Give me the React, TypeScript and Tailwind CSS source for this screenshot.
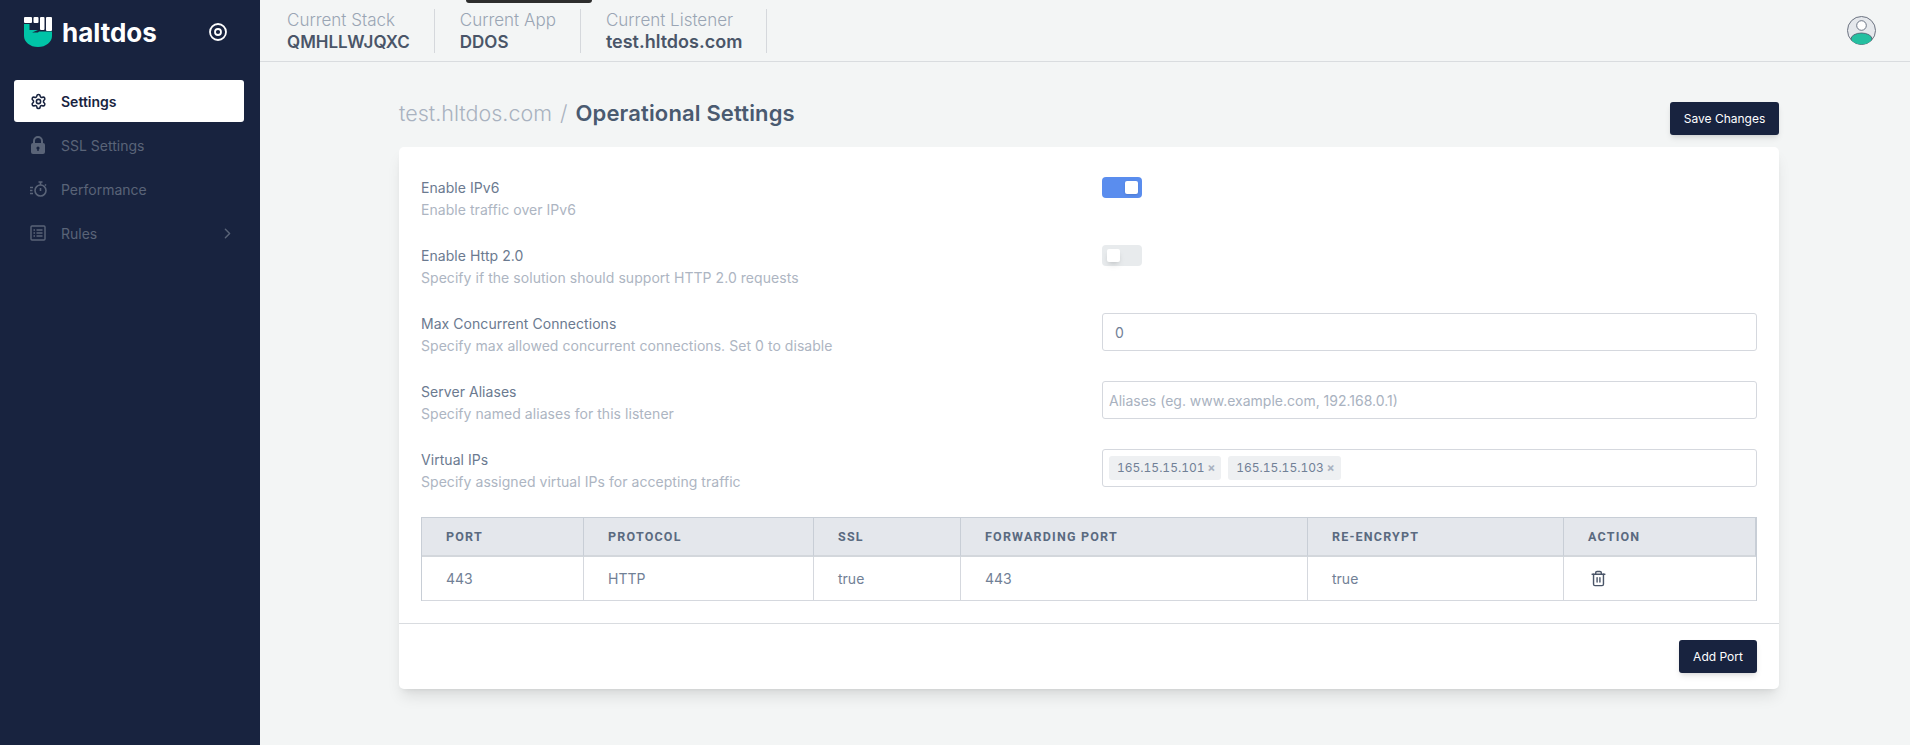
import type { ReactNode } from "react";
import { Settings, ChevronRight, Trash2 } from "lucide-react";

const headers = ["PORT", "PROTOCOL", "SSL", "FORWARDING PORT", "RE-ENCRYPT", "ACTION"];
const cells = ["443", "HTTP", "true", "443", "true"];

function Logo() {
  return (
    <svg width="28" height="30" viewBox="0 0 28 30">
      <rect x="0" y="0" width="8" height="6" rx="1" fill="#fff" />
      <rect x="9.5" y="0" width="5" height="6" rx="1" fill="#fff" />
      <rect x="16" y="0" width="4.5" height="13" rx="1" fill="#fff" />
      <rect x="22" y="0" width="6" height="14" rx="1" fill="#fff" />
      <path d="M0 7h5.5v6h8.5l-6 2.5H14l1-1h13V19c0 6-6 11-14 11S0 25 0 19z" fill="#00c4a7" />
    </svg>
  );
}

function LockIcon() {
  return (
    <svg width="16" height="18" viewBox="0 0 16 18" fill="none">
      <path d="M4 8V5a4 4 0 0 1 8 0v3" stroke="currentColor" strokeWidth="2" />
      <rect x="1" y="7" width="14" height="11" rx="2" fill="currentColor" />
      <circle cx="8" cy="12" r="1.6" fill="#18233f" />
      <rect x="7.3" y="12" width="1.4" height="3" fill="#18233f" />
    </svg>
  );
}

function TimerIcon() {
  return (
    <svg width="17" height="16" viewBox="0 0 17 16" fill="none" stroke="currentColor" strokeWidth="1.6">
      <circle cx="10.5" cy="9.5" r="5.5" />
      <path d="M8.5 1h4M10.5 1v3M10.5 7v3M15 3.5l1 1M0 6.5h3M0 9.5h2.5M0 12.5h3" />
    </svg>
  );
}

function ListIcon() {
  return (
    <svg width="16" height="16" viewBox="0 0 16 16" fill="none" stroke="currentColor" strokeWidth="1.4">
      <rect x="1" y="1" width="14" height="14" rx="1" />
      <path d="M3.5 5h1.5M3.5 8h1.5M3.5 11h1.5M6.5 5h6M6.5 8h6M6.5 11h6" />
    </svg>
  );
}

function Stat({ label, children }: { label: string; children: ReactNode }) {
  return (
    <div className="mr-[25px] h-[44px] border-r border-[#d5d8dc] pr-[24px]">
      <div className="text-[17px] font-light leading-[22px] text-[#9aa5b4]">{label}</div>
      {children}
    </div>
  );
}

function Row({ title, desc, children }: { title: string; desc: string; children: ReactNode }) {
  return (
    <div className="flex h-[68px]">
      <div className="w-[681px] tracking-[0.05px]">
        <div className="text-[14px] leading-[20px] text-[#6b7a90]">{title}</div>
        <div className="mt-[2px] text-[14px] leading-[20px] text-[#adb5c2]">{desc}</div>
      </div>
      <div className="mt-[-1px] flex-1">{children}</div>
    </div>
  );
}

function Chip({ ip }: { ip: string }) {
  return (
    <span className="flex h-[24px] items-center gap-[3px] rounded-[3px] bg-[#eef0f2] pl-[8px] pr-[6px] text-[12px] tabular-nums text-[#718096]">
      {ip}
      <span className="text-[12px] font-bold text-[#a9b2c0]">×</span>
    </span>
  );
}

export default function App() {
  return (
    <div className="flex h-[745px] w-[1910px] overflow-hidden bg-[#f3f5f5] font-['Inter',sans-serif]">
      <aside className="w-[260px] shrink-0 bg-[#18233f]">
        <div className="flex h-[64px] items-center justify-between pl-[24px] pr-[33px]">
          <div className="flex items-center gap-[10px]">
            <Logo />
            <span className="text-[26px] font-bold text-white">haltdos</span>
          </div>
          <svg width="18" height="18" viewBox="0 0 18 18" fill="none" stroke="#fff" strokeWidth="1.8">
            <circle cx="9" cy="9" r="8" />
            <circle cx="9" cy="9" r="3" />
          </svg>
        </div>
        <nav className="mt-[16px] pl-[14px] pr-[16px] text-[14px]">
          <div className="flex h-[42px] items-center gap-[14px] rounded-[3px] bg-white px-[16px] font-semibold text-[#18233f]">
            <Settings size={17} strokeWidth={2.2} />
            Settings
          </div>
          <div className="mt-[1px] flex h-[44px] items-center gap-[15px] px-[16px] text-[#5a6478]">
            <LockIcon />
            SSL Settings
          </div>
          <div className="flex h-[44px] items-center gap-[14px] px-[16px] text-[#5a6478]">
            <TimerIcon />
            Performance
          </div>
          <div className="flex h-[44px] items-center gap-[15px] px-[16px] text-[#5a6478]">
            <ListIcon />
            Rules
            <ChevronRight size={17} className="ml-auto mr-[-8px]" />
          </div>
        </nav>
      </aside>
      <main className="relative flex-1">
        <div className="absolute left-[206px] top-0 h-[3px] w-[126px] rounded-b-[3px] bg-[#2d2d2d]" />
        <header className="flex h-[62px] items-start justify-between border-b border-[#d9dcdf] pl-[27px] pr-[34px]">
          <div className="mt-[9px] flex">
            <Stat label="Current Stack">
              <div className="text-[17px] font-semibold leading-[22px] text-[#4a5568]">QMHLLWJQXC</div>
            </Stat>
            <Stat label="Current App">
              <div className="text-[17px] font-semibold leading-[22px] text-[#4a5568]">DDOS</div>
            </Stat>
            <Stat label="Current Listener">
              <div className="text-[18px] font-semibold leading-[22px] text-[#4a5568]">test.hltdos.com</div>
            </Stat>
          </div>
          <svg className="mt-[16px]" width="29" height="29" viewBox="0 0 29 29">
            <defs>
              <clipPath id="avatar">
                <circle cx="14.5" cy="14.5" r="14" />
              </clipPath>
            </defs>
            <circle cx="14.5" cy="14.5" r="14" fill="#e5e8ec" stroke="#6b7280" />
            <g clipPath="url(#avatar)">
              <ellipse cx="14.5" cy="23" rx="10.5" ry="6" fill="#24bfa0" stroke="#4a5568" strokeWidth="0.8" />
            </g>
            <circle cx="14.5" cy="9.5" r="4.8" fill="#fff" stroke="#4a5568" strokeWidth="0.8" />
          </svg>
        </header>
        <div className="ml-[139px] w-[1380px]">
          <div className="flex h-[85px] items-start justify-between">
            <h1 className="mt-[36px] flex items-baseline leading-[30px]">
              <span className="text-[21.5px] font-light text-[#a9b2c0]">test.hltdos.com</span>
              <span className="mx-[8px] text-[21.5px] font-light text-[#a9b2c0]">/</span>
              <span className="text-[22px] font-semibold tracking-[0.15px] text-[#4a5a70]">Operational Settings</span>
            </h1>
            <button className="mt-[40px] h-[33px] w-[109px] rounded-[3px] bg-[#18233f] text-[12px] text-white shadow-md">Save Changes</button>
          </div>
          <section className="h-[542px] rounded-[5px] bg-white shadow-lg">
            <div className="px-[22px] pt-[31px]">
              <Row title="Enable IPv6" desc="Enable traffic over IPv6">
                <div className="flex h-[21px] w-[40px] items-center justify-end rounded-[4px] bg-[#5a8dee] pr-[4px]">
                  <div className="h-[13px] w-[13px] rounded-[2px] bg-white shadow-sm" />
                </div>
              </Row>
              <Row title="Enable Http 2.0" desc="Specify if the solution should support HTTP 2.0 requests">
                <div className="flex h-[21px] w-[40px] items-center rounded-[4px] bg-[#e8ebed] pl-[5px]">
                  <div className="h-[13px] w-[13px] rounded-[2px] bg-white shadow-md" />
                </div>
              </Row>
              <Row title="Max Concurrent Connections" desc="Specify max allowed concurrent connections. Set 0 to disable">
                <input
                  readOnly
                  value="0"
                  className="h-[38px] w-full rounded-[3px] border border-[#d5d8de] px-[12px] text-[14px] text-[#718096] outline-none"
                />
              </Row>
              <Row title="Server Aliases" desc="Specify named aliases for this listener">
                <input
                  readOnly
                  placeholder="Aliases (eg. www.example.com, 192.168.0.1)"
                  className="h-[38px] w-full rounded-[3px] border border-[#d5d8de] px-[6px] text-[14px] outline-none placeholder:text-[#a9b2c0]"
                />
              </Row>
              <Row title="Virtual IPs" desc="Specify assigned virtual IPs for accepting traffic">
                <div className="flex h-[38px] items-center gap-[7px] rounded-[3px] border border-[#d5d8de] px-[6px]">
                  <Chip ip="165.15.15.101" />
                  <Chip ip="165.15.15.103" />
                </div>
              </Row>
              <div className="mt-[-1px] grid grid-cols-[162px_230px_147px_347px_256px_1fr] border-x border-t border-[#c8ced6] text-[14px] text-[#718096]">
                {headers.map((h) => (
                  <div
                    key={h}
                    className="flex h-[39px] items-center border-b-2 border-r border-b-[#d3d7dc] border-r-[#c8ced6] bg-[#e4e7ec] pl-[24px] pt-[1px] font-['Roboto',sans-serif] text-[12.5px] font-bold tracking-[1.2px] text-[#5a6a80] last:border-r-0"
                  >
                    {h}
                  </div>
                ))}
                {cells.map((c, i) => (
                  <div key={i} className="flex h-[44px] items-center border-b border-r border-[#d5d8de] pl-[24px]">
                    {c}
                  </div>
                ))}
                <div className="flex h-[44px] items-center border-b border-[#d5d8de] pl-[26px]">
                  <Trash2 size={17} className="text-[#4a5568]" />
                </div>
              </div>
            </div>
            <div className="mt-[22px] flex justify-end border-t border-[#d9dce0] px-[22px] pt-[16px]">
              <button className="h-[33px] w-[78px] rounded-[3px] bg-[#18233f] text-[12px] text-white shadow-md">Add Port</button>
            </div>
          </section>
        </div>
      </main>
    </div>
  );
}
